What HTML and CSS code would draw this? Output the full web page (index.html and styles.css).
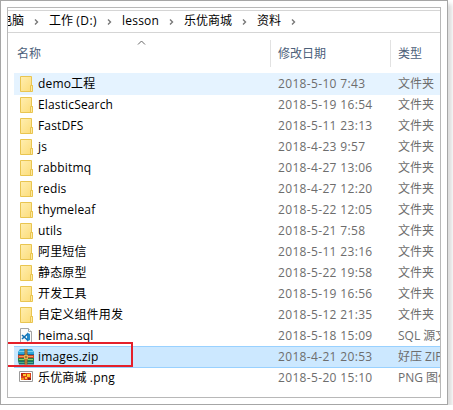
FILE: index.html
```
<!DOCTYPE html>
<html lang="zh-CN">
<head>
<meta charset="utf-8">
<title>资料</title>
<link rel="stylesheet" href="styles.css">
</head>
<body>
<svg width="0" height="0" class="defs">
  <defs>
    <linearGradient id="fold" x1="0" y1="0" x2="1" y2="1"><stop offset="0" stop-color="#ffeeb0"/><stop offset="1" stop-color="#fcdc78"/></linearGradient>
    <symbol id="folder" viewBox="0 0 16 16"><path d="M2.5.5h11v9h1v6h-12z" fill="url(#fold)" stroke="#e9c550"/><path d="M12.500 15V9.500h2V15" fill="#ffe9a0" stroke="#e9c550"/></symbol>
    <symbol id="sep" viewBox="0 0 5 6"><path d="M1 .5 3.500 3 1 5.500" fill="none" stroke="#777" stroke-width="1.4"/></symbol>
  </defs>
</svg>
<div class="card">
  <div class="window">
    <nav class="path">
      <span>电脑</span><svg><use href="#sep"/></svg>
      <span>工作 <span class="drive">(D:)</span></span><svg><use href="#sep"/></svg>
      <span class="lesson">lesson</span><svg><use href="#sep"/></svg>
      <span>乐优商城</span><svg><use href="#sep"/></svg>
      <span>资料</span><svg><use href="#sep"/></svg>
    </nav>
    <div class="head">
      <div class="name">名称<svg class="sort" viewBox="0 0 8 5"><path d="M.5 4.500 4 1l3.500 3.500" fill="none" stroke="#666"/></svg></div>
      <div class="date">修改日期</div>
      <div class="type">类型</div>
    </div>
    <div class="rows">
      <div class="row hover"><svg><use href="#folder"/></svg><span class="file">demo工程</span><time>2018-5-10 7:43</time><span class="kind">文件夹</span></div>
      <div class="row"><svg><use href="#folder"/></svg><span class="file">ElasticSearch</span><time>2018-5-19 16:54</time><span class="kind">文件夹</span></div>
      <div class="row"><svg><use href="#folder"/></svg><span class="file">FastDFS</span><time>2018-5-11 23:13</time><span class="kind">文件夹</span></div>
      <div class="row"><svg><use href="#folder"/></svg><span class="file">js</span><time>2018-4-23 9:57</time><span class="kind">文件夹</span></div>
      <div class="row"><svg><use href="#folder"/></svg><span class="file">rabbitmq</span><time>2018-4-27 13:06</time><span class="kind">文件夹</span></div>
      <div class="row"><svg><use href="#folder"/></svg><span class="file">redis</span><time>2018-4-27 12:20</time><span class="kind">文件夹</span></div>
      <div class="row"><svg><use href="#folder"/></svg><span class="file">thymeleaf</span><time>2018-5-22 12:05</time><span class="kind">文件夹</span></div>
      <div class="row"><svg><use href="#folder"/></svg><span class="file">utils</span><time>2018-5-21 7:58</time><span class="kind">文件夹</span></div>
      <div class="row"><svg><use href="#folder"/></svg><span class="file">阿里短信</span><time>2018-5-11 23:16</time><span class="kind">文件夹</span></div>
      <div class="row"><svg><use href="#folder"/></svg><span class="file">静态原型</span><time>2018-5-22 19:58</time><span class="kind">文件夹</span></div>
      <div class="row"><svg><use href="#folder"/></svg><span class="file">开发工具</span><time>2018-5-19 16:56</time><span class="kind">文件夹</span></div>
      <div class="row"><svg><use href="#folder"/></svg><span class="file">自定义组件用发</span><time>2018-5-12 21:35</time><span class="kind">文件夹</span></div>
      <div class="row">
        <svg viewBox="0 0 16 16"><path d="M2.500.5h8l3 3v12h-11z" fill="#fafafa" stroke="#a5a5a5"/><path d="M10.500.5v3h3" fill="#fff" stroke="#a5a5a5"/><path d="M9 4.500 12 6v6l-3 1.500z" fill="#2489ca"/><path d="m4 7 5.500 5M4 11l5.500-5" stroke="#1070b3" stroke-width="1.600"/></svg>
        <span class="file">heima.sql</span><time>2018-5-18 15:09</time><span class="kind">SQL 源文件</span></div>
      <div class="row selected">
        <svg viewBox="0 0 16 16"><path d="M2 0h12l2 3v3H0V3z" fill="#2da5d8"/><path d="M1 2.500h14" stroke="#7bd0ee"/><path d="M0 5.500h16" stroke="#146d9b"/><path d="M0 6h16v3H0z" fill="#c9482c"/><path d="M1 7.500h14" stroke="#f0a15c"/><path d="M0 9h16v3H0z" fill="#278044"/><path d="M1 10.500h14" stroke="#8fce6d"/><path d="M0 12h16v3.500H1z" fill="#1b6e70"/><path d="M1 13.500h14" stroke="#4eb37c"/><path d="M6.500 0h3v15.500h-3z" fill="#8a5627"/><path d="M8 0v16" stroke="#d69a42"/><path d="M6 6h4v4H6z" fill="#e3b14f"/><path d="M7.500 7h1v2h-1z" fill="#704016"/></svg>
        <span class="file">images.zip</span><time>2018-4-21 20:53</time><span class="kind">好压 ZIP 压缩文件</span></div>
      <div class="row">
        <svg viewBox="0 0 16 16"><path d="M1.500 1.500h13v10h-13z" fill="#fff" stroke="#9a9a9a"/><path d="M3 3h10v7H3z" fill="#d9401b"/><path d="M3 3h4v3H3z" fill="#b72812"/><path d="M5 4h3v2H5zM9 4h3v3H9zM7 7h2v2H7z" fill="#ffc72d"/><path d="M3 8h3v2H3z" fill="#f38b20"/><path d="M10 8h3v2h-3z" fill="#8d2414"/></svg>
        <span class="file">乐优商城 .png</span><time>2018-5-20 15:10</time><span class="kind">PNG 图像</span></div>
      <div class="mark"></div>
    </div>
  </div>
</div>
</body>
</html>
```
FILE: styles.css
```
* { box-sizing: border-box; }
body {
  margin: 0;
  overflow: hidden;
  background: #fff;
  font: 12px/20px "Open Sans", "Noto Sans CJK SC", sans-serif;
  color: #000;
}
.defs { display: block; }
.card {
  width: 448px;
  height: 405px;
  padding: 6px;
  border: 1px solid #a6a6a6;
  background: #fff;
  box-shadow: 4px 4px 4px #dedede;
}
.window {
  width: 434px;
  height: 391px;
  overflow: hidden;
  border: 1px solid #b8b8b8;
  white-space: nowrap;
}
.path {
  display: flex;
  align-items: center;
  height: 23px;
  margin-top: 2px;
  padding-bottom: 1px;
  border-top: 1px solid #d5d5d5;
  border-bottom: 1px solid #d5d5d5;
}
.path > span:first-child { margin-left: -8px; }
.path svg { flex: none; width: 5px; height: 6px; margin: 1px 10px 0; }
.drive { letter-spacing: .5px; }
.lesson { width: 37px; letter-spacing: .2px; }
.head {
  display: flex;
  height: 27px;
  margin-top: 7px;
  line-height: 27px;
  color: #4c607a;
}
.name { position: relative; width: 263px; padding-left: 9px; border-right: 1px solid #e2e2e2; }
.sort { position: absolute; left: 129px; top: 0; width: 9px; height: 5px; }
.date { width: 120px; padding-left: 7px; border-right: 1px solid #e2e2e2; }
.type { padding-left: 7px; }
.rows { position: relative; margin: 6px 0 0 6px; }
.row { display: flex; align-items: center; height: 21px; }
.row svg { flex: none; width: 16px; height: 16px; margin: 0 4px; }
.file { width: 240px; flex: none; letter-spacing: .15px; }
.row time { width: 120px; flex: none; color: #6d6d6d; letter-spacing: .34px; }
.kind { color: #6d6d6d; }
.hover { background: #e5f3ff; box-shadow: 0 1px #e5f3ff; }
.selected { background: #cce8ff; box-shadow: inset 0 1px #99d1ff, 0 1px #99d1ff; }
.mark {
  position: absolute;
  left: -8px;
  top: 269px;
  width: 127px;
  height: 25px;
  border: 2px solid #e5202a;
}
```
